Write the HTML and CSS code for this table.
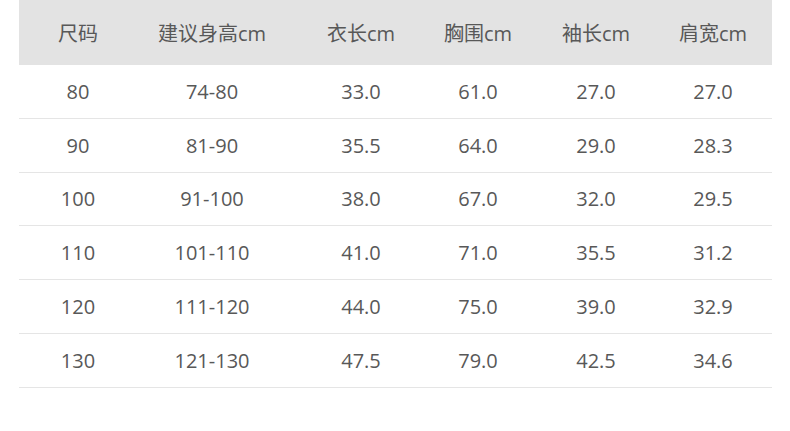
FILE: index.html
```html
<!DOCTYPE html>
<html lang="zh">
<head>
<meta charset="utf-8">
<link rel="stylesheet" href="styles.css">
</head>
<body>
<div class="table">
  <div class="row head">
    <div>尺码</div><div>建议身高cm</div><div>衣长cm</div><div>胸围cm</div><div>袖长cm</div><div>肩宽cm</div>
  </div>
  <div class="row"><div>80</div><div>74-80</div><div>33.0</div><div>61.0</div><div>27.0</div><div>27.0</div></div>
  <div class="row"><div>90</div><div>81-90</div><div>35.5</div><div>64.0</div><div>29.0</div><div>28.3</div></div>
  <div class="row"><div>100</div><div>91-100</div><div>38.0</div><div>67.0</div><div>32.0</div><div>29.5</div></div>
  <div class="row"><div>110</div><div>101-110</div><div>41.0</div><div>71.0</div><div>35.5</div><div>31.2</div></div>
  <div class="row"><div>120</div><div>111-120</div><div>44.0</div><div>75.0</div><div>39.0</div><div>32.9</div></div>
  <div class="row"><div>130</div><div>121-130</div><div>47.5</div><div>79.0</div><div>42.5</div><div>34.6</div></div>
</div>
</body>
</html>
```
FILE: styles.css
```css
html, body {
  margin: 0;
  padding: 0;
  background: #fff;
}
body {
  font-family: "Open Sans", "Noto Sans CJK SC", sans-serif;
  color: #585858;
  font-size: 20px;
}
.table {
  margin-left: 19px;
  width: 753px;
}
.row {
  display: grid;
  grid-template-columns: 118px 150px 148px 86px 150px 84px;
  padding-right: 17px;
  align-items: center;
  justify-items: center;
  height: 53.8px;
  box-sizing: border-box;
  border-bottom: 1px solid #e5e5e5;
}
.row.head {
  height: 65px;
  background: #e3e3e3;
  border-bottom: none;
  padding-bottom: 1px;
}
```
